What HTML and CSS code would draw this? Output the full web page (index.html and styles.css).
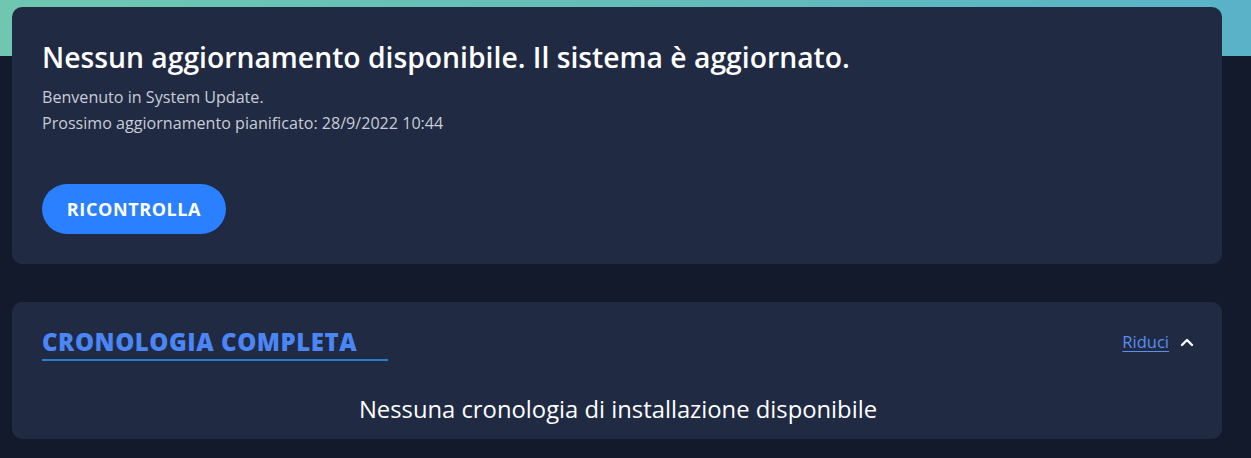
FILE: index.html
```html
<!DOCTYPE html>
<html lang="it">
<head>
<meta charset="utf-8">
<title>System Update</title>
<link rel="stylesheet" href="styles.css">
</head>
<body>
<main class="page">
  <section class="card status">
    <h1 class="title">Nessun aggiornamento disponibile. Il sistema è aggiornato.</h1>
    <p class="sub">Benvenuto in System Update.</p>
    <p class="sub">Prossimo aggiornamento pianificato: 28/9/2022 10:44</p>
    <button class="btn" type="button">RICONTROLLA</button>
  </section>
  <section class="card history">
    <div class="history-head">
      <h2 class="history-title">CRONOLOGIA COMPLETA</h2>
      <div class="toggle">
        <a class="toggle-link" href="#">Riduci</a>
        <svg class="chev" width="14" height="10" viewBox="0 0 14 10" aria-hidden="true"><path d="M2 8 L7 3 L12 8" fill="none" stroke="#ffffff" stroke-width="2.4" stroke-linecap="round" stroke-linejoin="round"/></svg>
      </div>
    </div>
    <p class="empty">Nessuna cronologia di installazione disponibile</p>
  </section>
</main>
</body>
</html>
```
FILE: styles.css
```css
* { box-sizing: border-box; }
html, body { margin: 0; padding: 0; }
body {
  width: 1251px;
  height: 458px;
  overflow: hidden;
  font-family: "Open Sans", "Noto Sans", sans-serif;
  background-color: #131a2c;
  background-image: linear-gradient(90deg, #6fc7b1 0%, #64bdb8 50%, #5ab2c9 100%);
  background-size: 100% 56px;
  background-repeat: no-repeat;
  color: #ffffff;
}
.page {
  padding: 7px 29px 0 12px;
  display: flex;
  flex-direction: column;
  gap: 38px;
}
.card {
  background: #202a43;
  border-radius: 10px;
}
.status {
  padding: 33px 30px 30px 30px;
  display: flex;
  flex-direction: column;
  align-items: flex-start;
}
.title {
  margin: 0 0 10px 0;
  font-size: 28.3px;
  font-weight: 600;
  line-height: 34px;
  letter-spacing: 0;
}
.sub {
  margin: 0;
  font-size: 16.1px;
  line-height: 26px;
  color: #c9cdd6;
  letter-spacing: 0;
}
.btn {
  margin-top: 48px;
  width: 184px;
  height: 50px;
  border: 0;
  border-radius: 25px;
  background: #2a80ff;
  color: #ffffff;
  font-family: inherit;
  font-size: 18px;
  font-weight: 700;
  letter-spacing: 0.6px;
}
.history {
  padding: 23px 28px 14px 30px;
  height: 137px;
}
.history-head {
  display: flex;
  justify-content: space-between;
  align-items: flex-start;
}
.history-title {
  margin: 0;
  width: 346px;
  font-size: 24px;
  font-weight: 800;
  line-height: 34px;
  color: #4b86f6;
  border-bottom: 2px solid #2a7dcb;
  letter-spacing: 0.55px;
}
.toggle {
  display: flex;
  align-items: center;
  gap: 11px;
  margin-top: 5px;
}
.toggle-link {
  color: #5b8ff2;
  font-size: 16.5px;
  text-decoration: underline;
  text-underline-offset: 3px;
}
.chev { display: block; }
.empty {
  margin: 33px 0 0 0;
  text-align: center;
  font-size: 23.8px;
  line-height: 30px;
  color: #ffffff;
  letter-spacing: 0;
}
```
